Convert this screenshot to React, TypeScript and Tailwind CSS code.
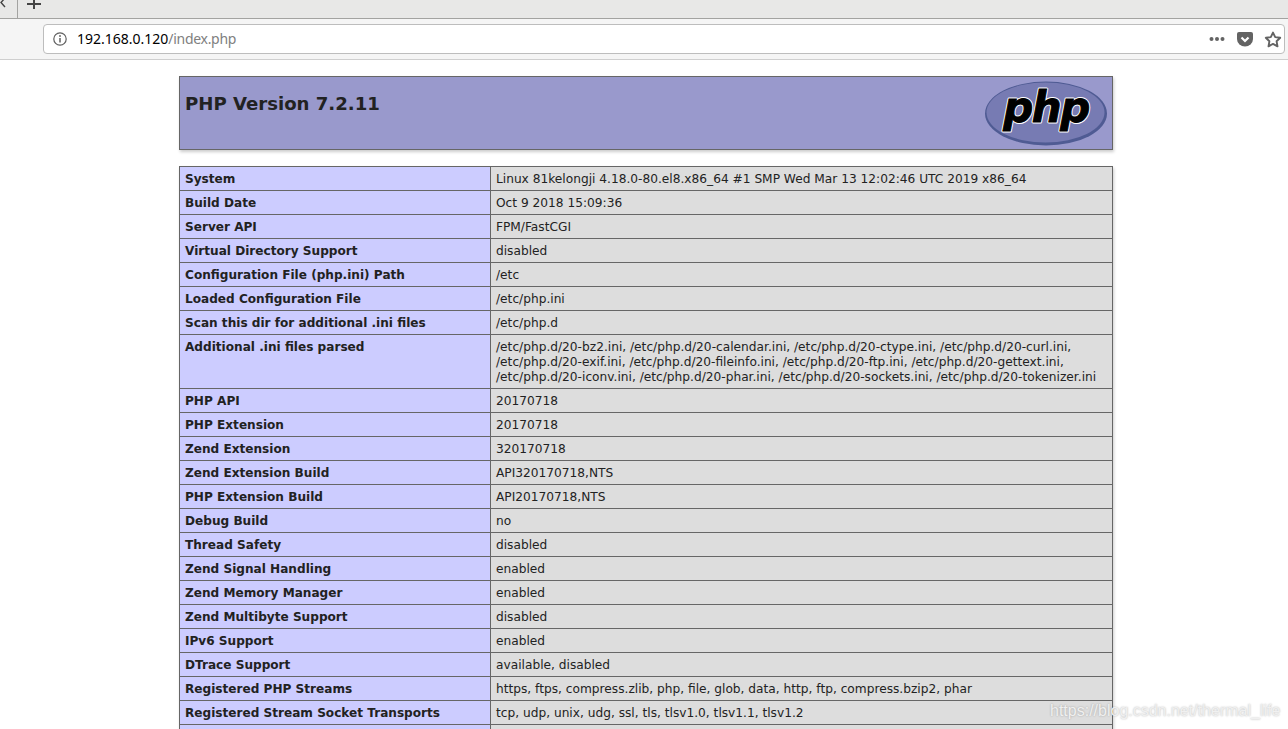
const rows: [string, string[]][] = [
  ['System', ['Linux 81kelongji 4.18.0-80.el8.x86_64 #1 SMP Wed Mar 13 12:02:46 UTC 2019 x86_64']],
  ['Build Date', ['Oct 9 2018 15:09:36']],
  ['Server API', ['FPM/FastCGI']],
  ['Virtual Directory Support', ['disabled']],
  ['Configuration File (php.ini) Path', ['/etc']],
  ['Loaded Configuration File', ['/etc/php.ini']],
  ['Scan this dir for additional .ini files', ['/etc/php.d']],
  [
    'Additional .ini files parsed',
    [
      '/etc/php.d/20-bz2.ini, /etc/php.d/20-calendar.ini, /etc/php.d/20-ctype.ini, /etc/php.d/20-curl.ini,',
      '/etc/php.d/20-exif.ini, /etc/php.d/20-fileinfo.ini, /etc/php.d/20-ftp.ini, /etc/php.d/20-gettext.ini,',
      '/etc/php.d/20-iconv.ini, /etc/php.d/20-phar.ini, /etc/php.d/20-sockets.ini, /etc/php.d/20-tokenizer.ini',
    ],
  ],
  ['PHP API', ['20170718']],
  ['PHP Extension', ['20170718']],
  ['Zend Extension', ['320170718']],
  ['Zend Extension Build', ['API320170718,NTS']],
  ['PHP Extension Build', ['API20170718,NTS']],
  ['Debug Build', ['no']],
  ['Thread Safety', ['disabled']],
  ['Zend Signal Handling', ['enabled']],
  ['Zend Memory Manager', ['enabled']],
  ['Zend Multibyte Support', ['disabled']],
  ['IPv6 Support', ['enabled']],
  ['DTrace Support', ['available, disabled']],
  ['Registered PHP Streams', ['https, ftps, compress.zlib, php, file, glob, data, http, ftp, compress.bzip2, phar']],
  ['Registered Stream Socket Transports', ['tcp, udp, unix, udg, ssl, tls, tlsv1.0, tlsv1.1, tlsv1.2']],
]

function PhpLogo() {
  const textProps = {
    x: 61,
    y: 41,
    textAnchor: 'middle' as const,
    fontFamily: "'DejaVu Sans', sans-serif",
    fontSize: 42,
    fontWeight: 700,
    fontStyle: 'italic',
    letterSpacing: -1.5,
  }
  return (
    <svg width="122" height="66" viewBox="0 0 122 66">
      <ellipse cx="61" cy="32.5" rx="61" ry="32" fill="#4f5b93" />
      <ellipse cx="60.5" cy="31.5" rx="59" ry="30" fill="#777bb3" />
      <text {...textProps} fill="#fff" stroke="#fff" strokeWidth="3" strokeLinejoin="round">
        php
      </text>
      <text {...textProps} fill="#000" stroke="#000" strokeWidth="1">
        php
      </text>
    </svg>
  )
}

export default function App() {
  return (
    <div className="relative h-[729px] overflow-hidden bg-white font-['DejaVu_Sans',sans-serif] text-[#222]">
      {/* Tab strip */}
      <div className="flex h-[19px] border-b border-[#a3a3a1] bg-[#e8e8e7]">
        <div className="flex h-[18px] w-[18px] items-start border-r border-[#a3a3a1]">
          <svg width="6" height="10" viewBox="0 0 6 10" className="-mt-0.5">
            <path d="M5 0 L1 4.5 L5 9" fill="none" stroke="#444" strokeWidth="1.4" />
          </svg>
        </div>
        <svg width="16" height="10" viewBox="0 0 16 10" className="ml-2">
          <path d="M8 0 V9 M1 4 H15" fill="none" stroke="#444" strokeWidth="2" />
        </svg>
      </div>

      {/* Toolbar */}
      <div className="flex h-[41px] items-start border-b border-[#cfcfcf] bg-[#f5f5f5] pt-[5px]">
        <div className="ml-[43px] mr-[3px] flex h-[30px] flex-1 items-center rounded-[4px] border border-[#bdbdbd] bg-white font-['Noto_Sans',sans-serif] text-[14px]">
          <svg width="16" height="16" viewBox="0 0 16 16" className="ml-2">
            <circle cx="8" cy="8" r="6.2" fill="none" stroke="#5f5f5f" strokeWidth="1.2" />
            <circle cx="8" cy="5" r="0.9" fill="#5f5f5f" />
            <path d="M8 7 V11.5" stroke="#5f5f5f" strokeWidth="1.5" />
          </svg>
          <span className="ml-[9px] pb-[2px] text-black">192.168.0.120</span>
          <span className="pb-[2px] tracking-[-0.3px] text-[#808080]">/index.php</span>
          <div className="ml-auto flex items-center">
            <svg width="16" height="6" viewBox="0 0 16 6">
              <circle cx="2.5" cy="3" r="2" fill="#636363" />
              <circle cx="8" cy="3" r="2" fill="#636363" />
              <circle cx="13.5" cy="3" r="2" fill="#636363" />
            </svg>
            <svg width="16" height="15" viewBox="0 0 16 15" className="ml-[12px]">
              <path d="M2 0 H14 A2 2 0 0 1 16 2 V7 A8 7.5 0 0 1 0 7 V2 A2 2 0 0 1 2 0 Z" fill="#636363" />
              <path d="M4.5 5.5 L8 9 L11.5 5.5" fill="none" stroke="#fff" strokeWidth="2.2" />
            </svg>
            <svg width="18" height="17" viewBox="0 0 18 17" className="ml-[11px] mr-[2px]">
              <path
                d="M9 1.6 L11.2 6.1 L16.2 6.8 L12.6 10.3 L13.5 15.3 L9 12.9 L4.5 15.3 L5.4 10.3 L1.8 6.8 L6.8 6.1 Z"
                fill="none"
                stroke="#636363"
                strokeWidth="1.9"
                strokeLinejoin="round"
              />
            </svg>
          </div>
        </div>
      </div>

      {/* phpinfo page */}
      <div className="ml-[179px] w-[934px] pt-4">
        <div className="flex h-[74px] justify-between border border-[#666] bg-[#9999cc] px-[5px] shadow-[1px_2px_3px_#ccc]">
          <h1 className="pt-[14px] text-[18.1px] leading-[26px] font-bold">PHP Version 7.2.11</h1>
          <div className="pt-[4px]">
            <PhpLogo />
          </div>
        </div>

        {/* last row runs off the bottom of the window */}
        <table className="mt-4 w-[934px] table-fixed border-collapse text-[12.2px] leading-[15px] shadow-[1px_2px_3px_#ccc]">
          <tbody>
            {rows.map(([label, lines]) => (
              <tr key={label}>
                <td className="w-[311px] border border-[#666] bg-[#ccccff] px-[5px] pt-[5px] pb-[3px] align-top text-[12.1px] font-bold">
                  {label}
                </td>
                <td className="border border-[#666] bg-[#dddddd] px-[5px] pt-[5px] pb-[3px] align-top">
                  {lines.map((l) => (
                    <div key={l} className="whitespace-nowrap">
                      {l}
                    </div>
                  ))}
                </td>
              </tr>
            ))}
            <tr>
              <td className="h-[24px] border border-[#666] bg-[#ccccff]" />
              <td className="h-[24px] border border-[#666] bg-[#dddddd]" />
            </tr>
          </tbody>
        </table>
      </div>

      {/* CSDN watermark */}
      <div className="absolute left-[1050px] top-[701px] font-['Liberation_Sans',sans-serif] text-[16px] leading-5 text-[#f0f0f0] [text-shadow:0_0_2px_rgba(0,0,0,0.3)]">
        https://blog.csdn.net/thermal_life
      </div>
    </div>
  )
}
